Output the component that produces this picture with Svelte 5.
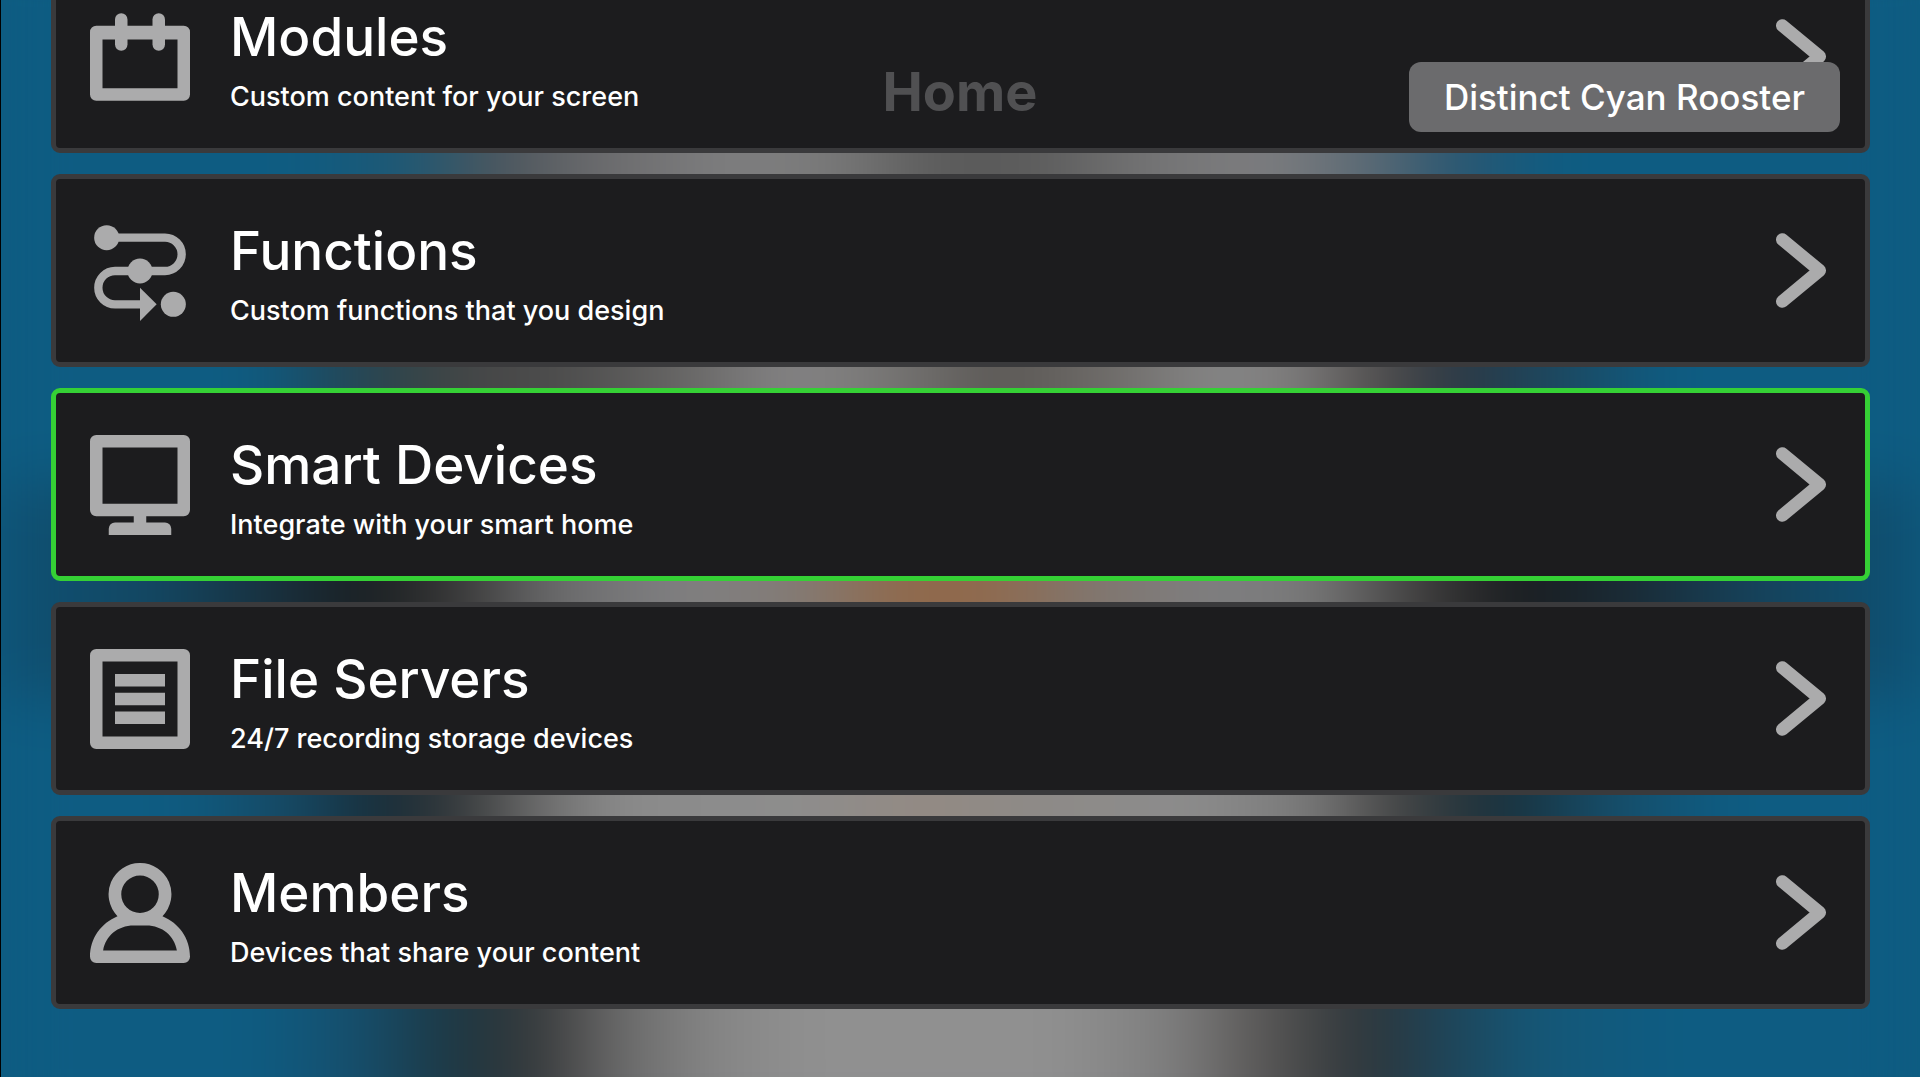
<script lang="ts">
  interface MenuItem {
    id: string;
    title: string;
    subtitle: string;
  }

  const items: MenuItem[] = [
    { id: "modules", title: "Modules", subtitle: "Custom content for your screen" },
    { id: "functions", title: "Functions", subtitle: "Custom functions that you design" },
    { id: "devices", title: "Smart Devices", subtitle: "Integrate with your smart home" },
    { id: "servers", title: "File Servers", subtitle: "24/7 recording storage devices" },
    { id: "members", title: "Members", subtitle: "Devices that share your content" },
  ];

  let focused = $state("devices");
</script>

<div class="screen">
  <div class="backdrop" aria-hidden="true">
    <div class="band band-top"></div>
    <div class="band band-upper"></div>
    <div class="band band-middle"></div>
    <div class="band band-lower"></div>
    <div class="band band-bottom"></div>
  </div>

  <header class="title-bar">
    <h1>Home</h1>
    <button class="device-name" type="button">Distinct Cyan Rooster</button>
  </header>

  <main class="menu">
    {#each items as item (item.id)}
      <button
        class="card"
        class:focused={focused === item.id}
        type="button"
        onclick={() => (focused = item.id)}
      >
        {#if item.id === "modules"}
          <svg class="icon" viewBox="0 0 16 16">
            <path
              fill-rule="evenodd"
              d="M1 3h14a1 1 0 0 1 1 1v10a1 1 0 0 1-1 1H1a1 1 0 0 1-1-1V4a1 1 0 0 1 1-1zM2 5.2v7.800h12V5.200z"
            />
            <rect x="4" y="1" width="2" height="6" rx="1" />
            <rect x="10" y="1" width="2" height="6" rx="1" />
          </svg>
        {:else if item.id === "functions"}
          <svg class="icon" viewBox="0 0 24 24">
            <path class="line" d="M4 4h14a4 4 0 0 1 0 8H6a4 4 0 0 0 0 8h7" />
            <circle cx="4" cy="4" r="3" />
            <circle cx="12" cy="12" r="3" />
            <circle cx="20" cy="20" r="3" />
            <path d="M12 16l4 4-4 4z" />
          </svg>
        {:else if item.id === "devices"}
          <svg class="icon" viewBox="0 0 16 16">
            <path
              fill-rule="evenodd"
              d="M1 0h14a1 1 0 0 1 1 1v11a1 1 0 0 1-1 1H9v1h3a1 1 0 0 1 1 1v1H3v-1a1 1 0 0 1 1-1h3v-1H1a1 1 0 0 1-1-1V1a1 1 0 0 1 1-1zM2 2v9h12V2z"
            />
          </svg>
        {:else if item.id === "servers"}
          <svg class="icon" viewBox="0 0 16 16">
            <path
              fill-rule="evenodd"
              d="M1 0h14a1 1 0 0 1 1 1v14a1 1 0 0 1-1 1H1a1 1 0 0 1-1-1V1a1 1 0 0 1 1-1zM2 2v12h12V2z"
            />
            <path d="M4 4h8v2H4zM4 7h8v2H4zM4 10h8v2H4z" />
          </svg>
        {:else}
          <svg class="icon" viewBox="0 0 16 16">
            <path
              fill-rule="evenodd"
              d="M8 0a5 5 0 0 1 3.6 8.5C14.2 9.6 16 12 16 15a1 1 0 0 1-1 1H1a1 1 0 0 1-1-1c0-3 1.8-5.4 4.4-6.5A5 5 0 0 1 8 0zM8 2a3 3 0 1 0 0 6 3 3 0 0 0 0-6zM7 10c-2.600 0-4.500 1.700-4.900 4h11.800c-.4-2.300-2.300-4-4.900-4z"
            />
          </svg>
        {/if}
        <span class="labels">
          <span class="title">{item.title}</span>
          <span class="subtitle">{item.subtitle}</span>
        </span>
        <svg class="chevron" viewBox="0 0 51 76">
          <path d="M6.500 6.500L44.500 38L6.500 69.500" />
        </svg>
      </button>
    {/each}
  </main>
</div>

<style>
  :global(body) {
    background: #0e5c82;
  }

  .screen {
    position: relative;
    box-sizing: border-box;
    min-height: 100vh;
    overflow: hidden;
    border-left: 1px solid #000;
    font-family: Inter, "Liberation Sans", sans-serif;
    color: #fff;
  }

  /* taller than the screen so the blur never fades at the top or bottom edge */
  .backdrop {
    position: absolute;
    inset: -64px 0;
    display: grid;
    grid-template-rows: 334fr 214fr 214fr 214fr 229fr;
    filter: blur(30px);
    background: #0e5c82;
  }

  .band-top {
    background: linear-gradient(90deg, #0e5c82 15%, #1e5874 21%, #4c555c 26%, #6a6a6c 31%, #7e7e7f 38%, #7a7a7a 43%, #5a5a5a 49%, #5c5c5c 54%, #747475 60%, #7d7d7f 66%, #5d6a74 71%, #2a5670 76%, #0e5c82 81%);
  }

  .band-upper {
    background: linear-gradient(90deg, #0e5c82 13%, #1d4a60 17%, #334347 21%, #474747 25%, #4c4c4c 29%, #646362 35%, #848384 41%, #7c7b7a 45%, #5b5855 52%, #6b6865 57%, #858585 63%, #807f7f 67%, #4f4c4b 72%, #2b3844 76%, #1c4860 81%, #0e5c82 87%);
  }

  .band-middle {
    background: linear-gradient(90deg, #0f4f70 2%, #134762 8%, #192d39 15%, #1a1f22 19%, #323232 23%, #6b6b6c 29%, #7f7f81 35%, #827c78 41%, #8f694c 47%, #90694c 51%, #80766f 57%, #7e7e80 63%, #7a7a7a 68%, #363535 75%, #1a1d20 79%, #1a2b36 85%, #164159 91%, #0f4f70 98%);
  }

  .band-lower {
    background: linear-gradient(90deg, #0e5c82 9%, #164964 15%, #182c37 20%, #383a3b 24%, #6b6b6b 28%, #8a8a8a 32%, #8d8d8d 41%, #938a83 48%, #8d8a87 54%, #8c8c8c 62%, #7a7a7a 68%, #424242 73%, #19303b 78%, #164d69 84%, #0e5c82 90%);
  }

  .band-bottom {
    background: linear-gradient(90deg, #0e5c82 13%, #15506f 18%, #1e3640 24%, #38393a 28%, #686868 32%, #858585 37%, #909090 42%, #909090 55%, #7e7e7e 61%, #575554 66%, #2e3539 71%, #1f4356 75%, #155777 80%, #0e5c82 87%);
  }

  .title-bar {
    position: absolute;
    inset: 62px 29px auto 50px;
    z-index: 1;
    display: grid;
    grid-template-columns: 1fr auto 1fr;
    align-items: start;
    padding: 0 51px 0 29px;
  }

  h1 {
    grid-column: 2;
    margin: 0;
    font-size: 54px;
    font-weight: 700;
    line-height: 60px;
    color: #505052;
  }

  .device-name {
    justify-self: end;
    height: 70px;
    padding: 0 35px;
    border: 0;
    border-radius: 12px;
    background: #6b6b6d;
    color: #fff;
    font: 500 35px/70px Inter, "Liberation Sans", sans-serif;
    white-space: nowrap;
  }

  .menu {
    position: relative;
    display: flex;
    flex-direction: column;
    gap: 21px;
    margin-top: -40px;
    padding: 0 50px;
  }

  .card {
    display: flex;
    align-items: center;
    gap: 40px;
    min-height: 193px;
    padding: 0 39px 0 34px;
    border: 5px solid #3a3a3c;
    border-radius: 9px;
    background: #1c1c1e;
    color: inherit;
    font-family: inherit;
    text-align: left;
  }

  .card.focused {
    border-color: #35d035;
  }

  .icon {
    flex: none;
    width: 100px;
    height: 100px;
    fill: #ababac;
  }

  .line {
    fill: none;
    stroke: #ababac;
    stroke-width: 2;
  }

  .labels {
    display: flex;
    flex: 1;
    flex-direction: column;
    padding-top: 12px;
  }

  .title {
    font-size: 53px;
    font-weight: 500;
    line-height: 68px;
  }

  .subtitle {
    font-size: 27px;
    font-weight: 500;
    line-height: 52px;
  }

  .chevron {
    flex: none;
    width: 50px;
    height: 75px;
    fill: none;
    stroke: #ababac;
    stroke-width: 13;
    stroke-linecap: round;
    stroke-linejoin: round;
  }
</style>
